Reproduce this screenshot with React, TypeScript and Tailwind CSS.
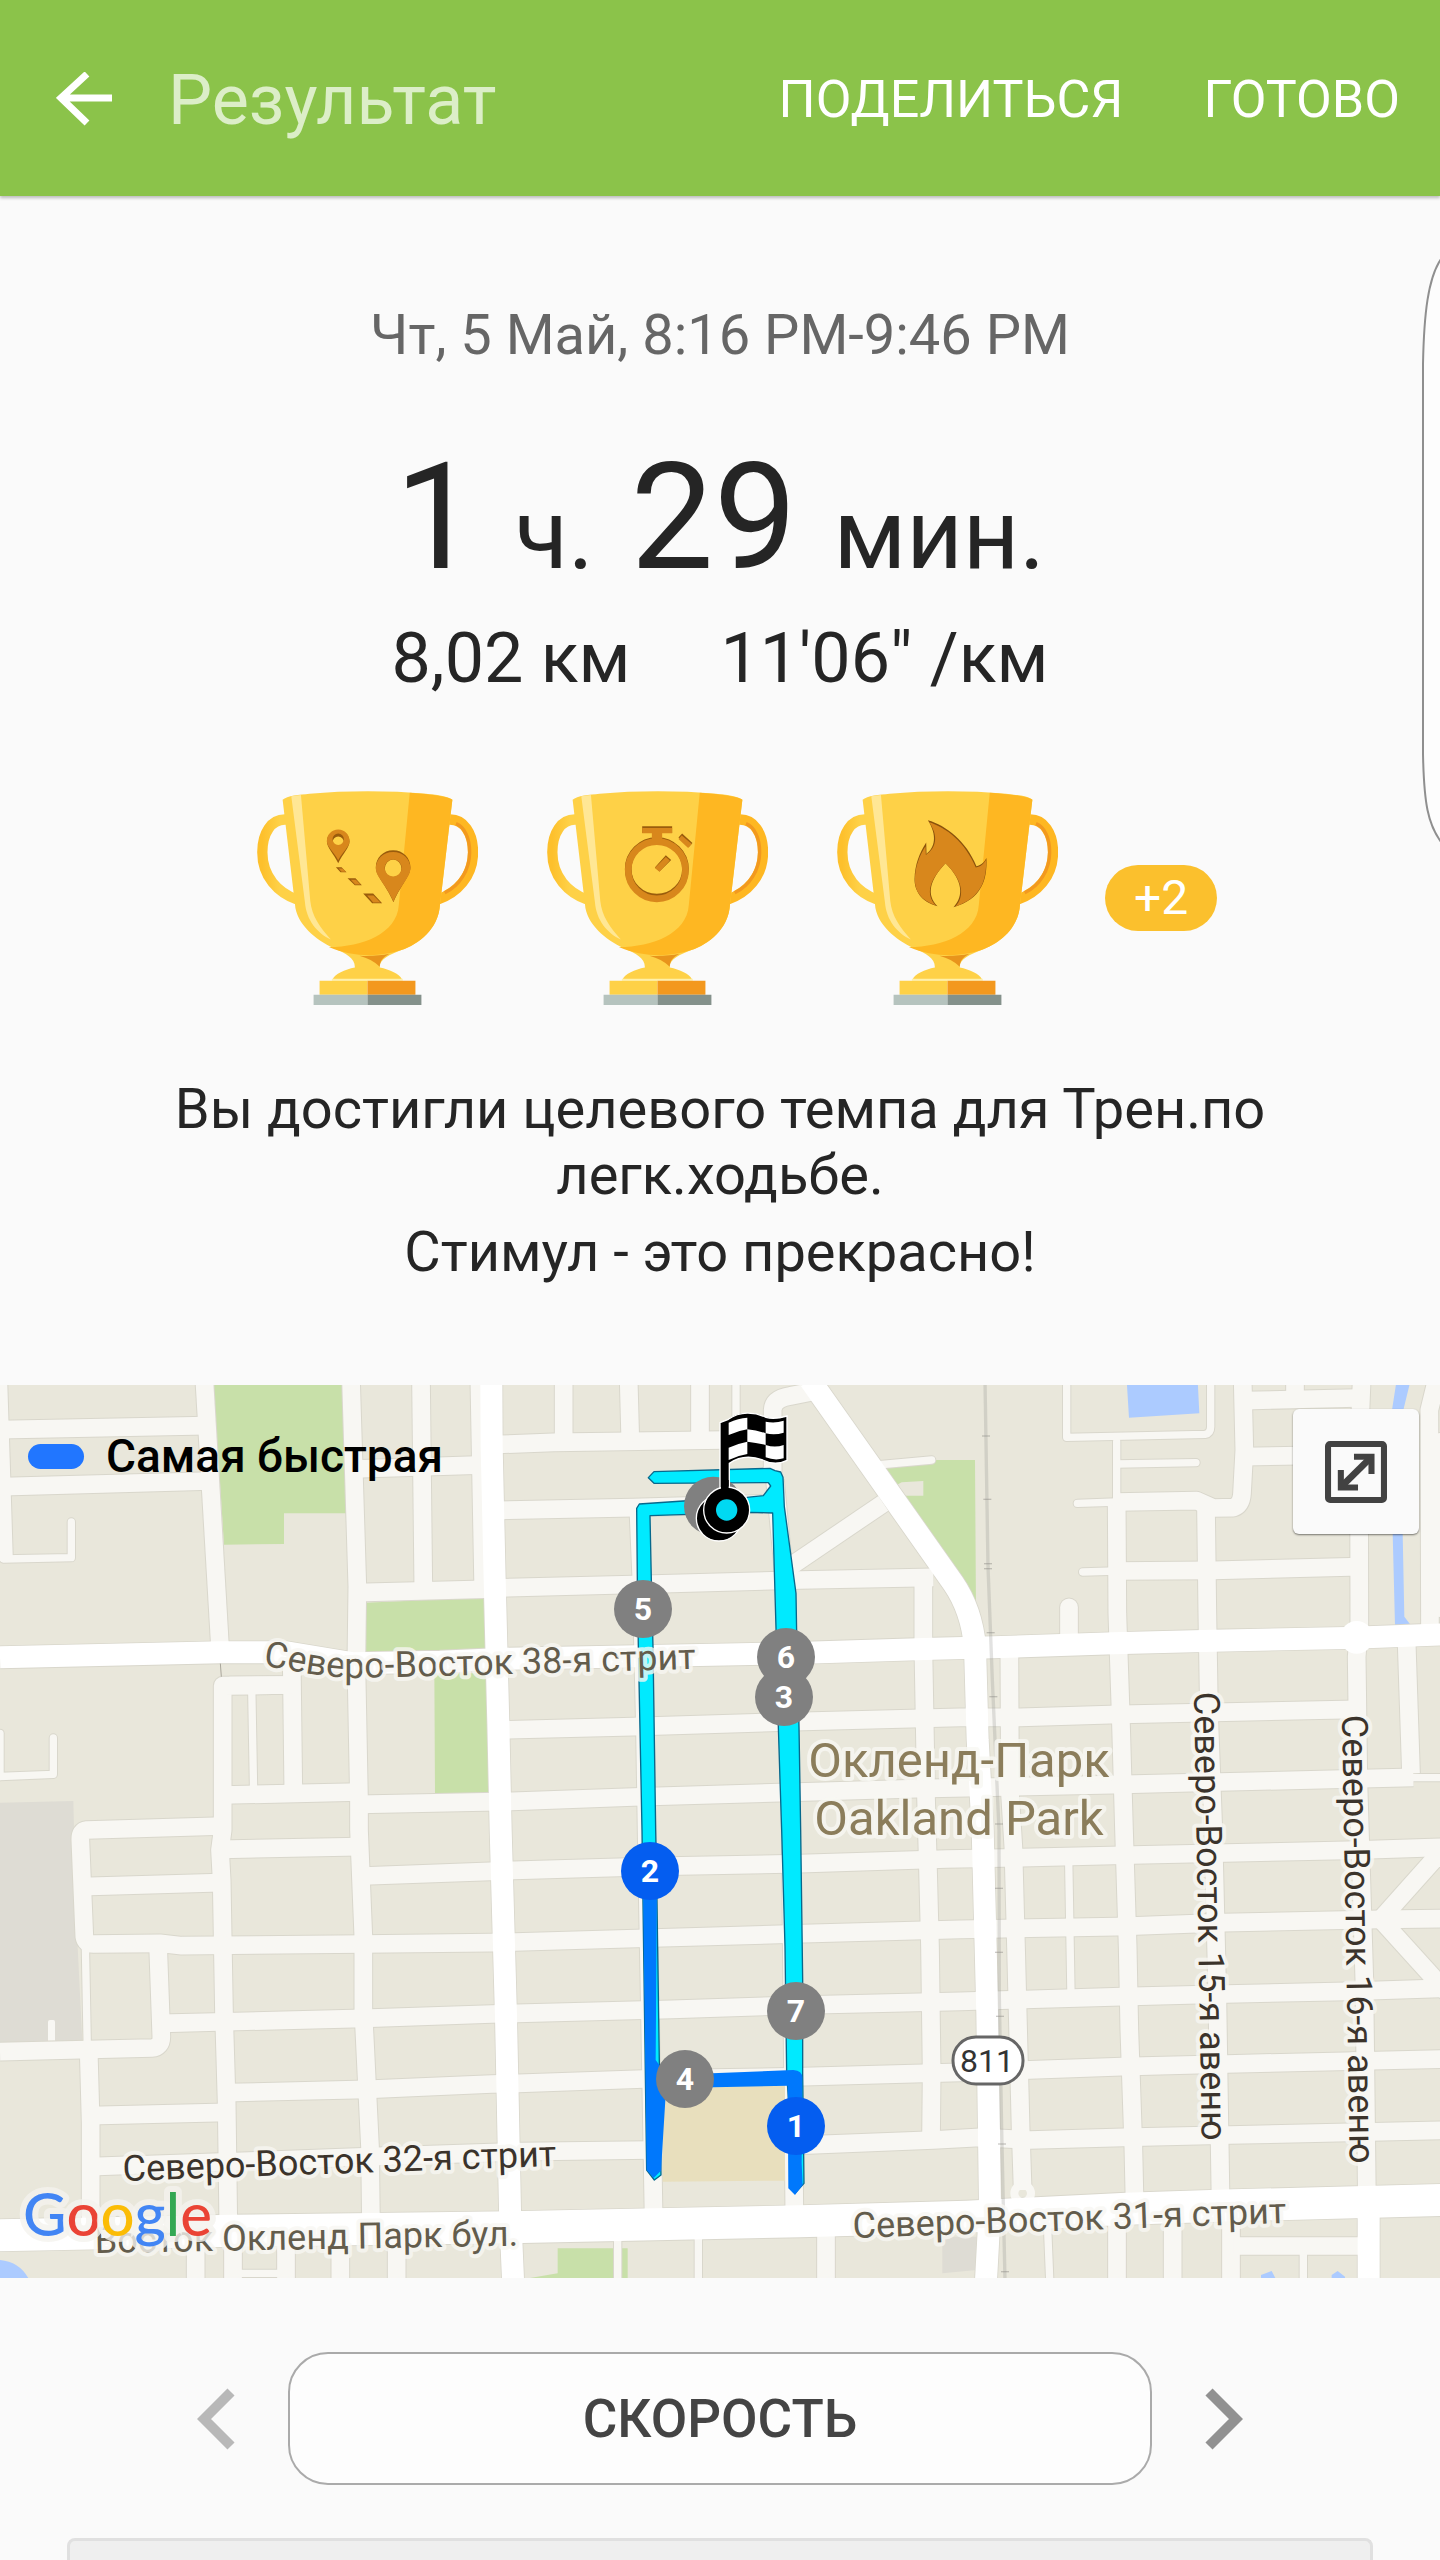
import React from 'react';

// Map geometry is kept at three units per pixel, origin 5px above the map's top edge.
const minorRoads = [
  'M-5 0 L12 540', 'M0 149 L620 137', 'M10 320 L630 303', 'M613 0 L660 800',
  'M1053 0 L1072 620 L1069 850 L1077 1260 L1077 1350 L1090 1670 L1090 1890 L1110 2300 L1113 2540',
  'M1263 0 L1270 630', 'M1060 267 L1475 254', 'M1070 638 L1480 627', 'M1438 0 L1450 640',
  'M875 830 L880 1240', 'M688 917 L875 915',
  'M875 915 L668 917 L668 1350 L660 1410 L665 1500 L668 1670 L672 1900 L680 2170 L685 2540',
  'M668 1245 L1077 1236', 'M668 1338 L260 1350 Q240 1352 241 1380 L253 1670 Q256 1692 280 1692 L480 1690 L545 1697 L1090 1692 L1475 1688 L1545 1686 L1960 1674 L2410 1661 L2880 1648 L3350 1640 L3670 1628 L4140 1618 L4330 1616',
  'M1077 1273 L1535 1264 L1900 1251 L2340 1238 L2750 1226 L3340 1214 L3660 1206 L4240 1192',
  'M244 1520 L660 1508', 'M660 1408 L1077 1400',
  'M1090 1488 L1470 1474 L1540 1471 L1960 1459 L2400 1451 L2840 1437 L3065 1433 L3400 1425 L4040 1411 L4330 1402',
  'M4142 1618 L4350 1385', 'M4142 1618 L4370 1870',
  'M0 2015 L455 2004 Q484 2002 484 1970 L474 1690',
  'M484 1930 L1090 1915 L1475 1902 L1550 1900 L2015 1888 L2415 1875 L2880 1864 L3365 1850 L3680 1842 L4040 1834 L4330 1825',
  'M266 2010 L272 2230 L272 2550', 'M270 2207 L680 2197',
  'M680 2138 L1100 2128 L1475 2112 L1555 2110 L1930 2097 L2410 2090 L2880 2077 L3365 2060 L3680 2052 L4330 2037',
  'M272 2360 L1110 2330 L1475 2318 L1560 2315 L1950 2310',
  'M2390 2296 L2800 2280 L2940 2272 L3090 2280 L3370 2272 L3690 2265 L4330 2251',
  'M1475 194 L1660 187 L2170 180 L2320 178', 'M1490 391 L1900 383 L2330 370',
  'M1490 624 L1960 612 L2400 600 L2800 592', 'M1495 1050 L1900 1040 L2410 1024 L2880 1012 L3060 1012 L3330 1004 L4070 988',
  'M1691 0 V190', 'M1886 0 L1891 185', 'M2100 0 V180',
  'M2460 30 L2370 48 Q2320 56 2318 90 L2318 300',
  'M1915 385 L1925 620 L1935 1050 L1942 1480 L1950 1900 L1961 2520',
  'M2325 300 L2355 620 L2372 1350 L2383 2500', 'M2370 560 L2650 370',
  'M2770 590 L2770 800 L2778 1250 L2783 1430 L2790 1700 L2795 2080 L2793 2280',
  'M3028 800 L3030 1240 L3040 1400 L3048 1700 L3062 2250 L3068 2430',
  'M3350 360 L3352 700 L3362 1000 L3372 1350 L3383 1700 L3388 1950 L3400 2300 L3404 2480',
  'M3350 366 L3590 362 L3640 384 L3700 383 Q3724 375 3726 340 L3733 210 L3728 0',
  'M3618 385 L3622 700 L3627 1000 L3640 1350 L3652 1850 L3662 2480', 'M3350 573 L3640 571 L4080 560',
  'M3730 62 L4070 54', 'M3885 0 V50', 'M3730 230 L4080 224',
  'M4085 0 L4077 200 L4078 740 L4070 830 L4075 1200 L4093 1800 L4101 2480',
  'M4310 0 L4288 90 L4290 760', 'M4220 790 L4233 1180',
  'M587 2570 V2720', 'M699 2570 V2720', 'M858 2570 V2720', 'M1021 2570 V2720', 'M1190 2570 V2720',
  'M2478 2540 V2720', 'M3351 2520 V2720', 'M3518 2520 V2720', 'M3693 2520 V2720', 'M3700 2598 H4100',
];

const alleys = [
  'M10 537 L214 533 L214 426', 'M755 917 L761 1245', 'M-10 1190 L160 1183 L160 1074', 'M0 1060 V1190',
  'M256 1690 L262 2010', 'M2208 0 V180', 'M2630 255 L2795 240', 'M3200 0 V172 L3615 163 Q3632 160 3632 140 V0',
  'M3350 185 V360', 'M3350 252 L3588 248', 'M3232 370 L3350 366', 'M3248 576 L3350 573',
  'M3206 1440 L3213 1845', 'M4240 1193 H4330', 'M700 2680 H860', 'M1853 2580 V2720', 'M2095 2570 V2720',
  'M3143 2550 L3150 2720', 'M3910 2600 V2720', 'M4320 170 V700',
];

const mainRoads = [
  'M0 832 L660 817 L860 817 L1060 850 L1320 845 L1520 836 L2320 821 L2800 806 L2980 802 L3340 790 L3640 782 L4040 774 L4330 763',
  'M1474 0 L1475 200 L1484 600 L1495 1030 L1502 1350 L1518 1910 L1530 2490 L1540 2720',
  'M2430 0 L2860 610 Q2915 690 2925 800 L2933 1080 L2948 1350 L2962 1900 L2970 2480 L2957 2720',
  'M4106 2480 V2720',
];

const boulevard = 'M-10 2566 L700 2552 L1530 2542 L2400 2524 L2900 2510 L3380 2486 L3700 2476 L4330 2460';

const markers = [
  { label: '5', x: 643, y: 224, fill: '#808080' },
  { label: '6', x: 786, y: 272, fill: '#808080' },
  { label: '3', x: 784, y: 312, fill: '#808080' },
  { label: '2', x: 650, y: 486, fill: '#045df0' },
  { label: '7', x: 796, y: 626, fill: '#808080' },
  { label: '4', x: 685, y: 694, fill: '#808080' },
  { label: '1', x: 796, y: 741, fill: '#045df0' },
];

const railTicks = [
  [2958, 168], [2962, 358], [2964, 551], [2964, 566], [2972, 758], [2980, 950], [2997, 1332],
  [2997, 1525], [2997, 1717], [3000, 1909], [3006, 2292], [3015, 2675],
];

const Trophy: React.FC<{ id: string; label: string; children: React.ReactNode }> = ({ id, label, children }) => (
  <svg viewBox="172 62 664 643" className="w-[221px] h-[214px]" role="img" aria-label={label}>
    <defs>
      <linearGradient id={`${id}-left`} x1="0" x2="1">
        <stop offset="0" stopColor="#fdc02c" />
        <stop offset="0.5" stopColor="#fed147" />
      </linearGradient>
    </defs>
    {/* Handles */}
    <path d="M262 148 C214 144 188 190 188 246 C188 320 236 368 292 388" fill="none" stroke={`url(#${id}-left)`} strokeWidth="31" />
    <path d="M746 148 C794 144 821 190 821 246 C821 320 772 368 716 388" fill="none" stroke="#feb722" strokeWidth="31" />
    <path d="M770 160 C796 170 811 205 811 246 C811 300 780 346 736 368" fill="none" stroke="#f2991f" strokeWidth="10" />
    {/* Cup */}
    <path d="M249 88 C262 76 300 73 330 70 C440 60 570 60 680 70 C708 73 746 77 759 88 L722 402 C718 478 656 522 606 540 C570 555 540 566 541 592 C570 598 602 612 607 627 H400 C405 612 436 598 466 592 C467 566 440 550 402 534 C350 510 290 462 286 402 Z" fill="#fed147" />
    <path d="M631 67 C680 70 746 77 759 88 L722 402 C718 478 656 522 606 540 C540 562 460 562 388 531 C490 530 592 490 598 405 Z" fill="#feb722" />
    <path d="M480 557 C512 559 546 556 570 551 C548 562 541 576 541 590 C524 574 504 564 480 557 Z" fill="#e8941c" />
    <path d="M275 78 L304 74 L332 392 C336 438 364 476 394 508 C354 490 320 450 316 396 Z" fill="#ffe795" />
    <path d="M397 626 H610 V632 H397 Z" fill="#fff0a8" />
    {/* Base */}
    <path d="M360 632 H504 V674 H360 Z" fill="#fed147" />
    <path d="M504 632 H648 V674 H504 Z" fill="#f3981e" />
    <path d="M342 674 H504 V705 H342 Z" fill="#b5c3be" />
    <path d="M504 674 H666 V705 H504 Z" fill="#84918b" />
    {children}
  </svg>
);

const RouteEmblem = () => (
  <g>
    <g fill="#9a5c0c">
      <path fillRule="evenodd" d="M416 181 C436 181 450 196 450 214 C450 232 430 250 416 279 C402 250 382 232 382 214 C382 196 396 181 416 181 Z M416 199 A17 18 0 1 0 416 235 A17 18 0 1 0 416 199 Z" />
      <path fillRule="evenodd" d="M581 240 C611 240 633 263 633 291 C633 318 606 340 582 396 C558 340 529 318 529 291 C529 263 551 240 581 240 Z M581 268 A25 27 0 1 0 581 322 A25 27 0 1 0 581 268 Z" />
      <path d="M409 291 H426 L441 306 H423 Z M444 324 H468 L487 345 H466 Z M491 370 H521 L548 399 H518 Z" />
    </g>
    <g fill="#d8871c">
      <path fillRule="evenodd" d="M416 178 C436 178 450 194 450 212 C450 230 432 240 416 270 C400 240 382 230 382 212 C382 194 396 178 416 178 Z M416 190 A17 17 0 1 0 416 224 A17 17 0 1 0 416 190 Z" />
      <path fillRule="evenodd" d="M581 245 C611 245 633 267 633 294 C633 320 606 340 582 394 C558 340 529 320 529 294 C529 267 551 245 581 245 Z M581 268 A25 25 0 1 0 581 319 A25 25 0 1 0 581 268 Z" />
      <path d="M417 295 H429 L439 305 H426 Z M454 329 H469 L483 343 H467 Z M503 376 H522 L543 397 H521 Z" />
    </g>
  </g>
);

const StopwatchEmblem = () => (
  <g>
    <g stroke="#9a5c0c" fill="#9a5c0c">
      <ellipse cx="502" cy="296" rx="86" ry="85" fill="none" strokeWidth="20" />
      <path stroke="none" d="M458 168 H548 V188 H458 Z M578 190 L609 218 L598 230 L567 202 Z M529 255 L545 269 L510 304 L496 292 Z" />
    </g>
    <g stroke="#d8871c" fill="#d8871c">
      <ellipse cx="502" cy="300" rx="86" ry="86" fill="none" strokeWidth="20" />
      <path stroke="none" d="M458 173 H548 V189 H518 V212 H487 V189 H458 Z M577 196 L607 221 L596 233 L567 206 Z M529 260 L541 271 L510 305 L496 293 Z" />
    </g>
  </g>
);

const FlameEmblem = () => (
  <g>
    <path d="M445 150 C500 166 560 212 591 288 C606 284 614 276 621 263 C624 330 606 386 522 411 C554 378 550 330 498 279 C450 330 440 374 474 408 C424 396 404 360 405 326 C406 284 420 248 440 217 L441 251 C466 232 474 196 445 150 Z" fill="#8a520c" />
    <path d="M449 156 C500 172 556 214 589 292 C604 290 614 280 620 268 C622 330 604 384 528 409 C556 378 552 332 498 279 C448 332 438 372 468 405 C424 392 405 360 406 328 C407 288 420 256 438 228 L439 254 C470 234 478 198 449 156 Z" fill="#d8871c" />
  </g>
);

const RouteMap = () => (
  <svg viewBox="0 0 1440 893" className="block w-full" role="img" aria-label="Карта маршрута">
    <rect width="1440" height="893" fill="#e9e7db" />
    <g transform="translate(0 -5) scale(0.333333)" fill="none">
      {/* Parks, water, grounds */}
      <path fill="#c8e0a9" d="M640 0 H1027 L1040 400 H852 V492 L672 494 Z M1098 668 L1455 652 L1462 820 H1098 Z M1303 880 H1466 V1238 L1305 1242 Z M2630 240 H2925 L2928 690 L2880 620 L2630 260 Z M1590 2694 L1673 2680 V2605 H1883 V2694 Z" />
      <path fill="#e9e7db" d="M2690 315 L2705 307 L2770 303 V347 H2700 Z" />
      <path fill="#accbff" d="M3380 0 H3593 L3598 100 L3387 113 Z M4190 0 H4232 L4210 90 L4208 460 L4213 710 L4232 735 H4185 L4178 460 L4176 90 Z M0 2640 Q60 2645 88 2700 H0 Z M3783 2685 L3815 2673 L3829 2700 H3783 Z M3995 2685 L4013 2673 L4035 2690 V2700 H3995 Z" />
      <path fill="#dedcd4" d="M0 1268 L220 1263 L228 1600 L247 1985 L0 1992 Z M2827 2570 H2930 V2670 L2827 2680 Z" />
      <path fill="#f8f7f3" d="M144 1926 Q144 1920 150 1920 H160 Q165 1920 165 1926 V1982 H144 Z" />

      {/* Road edges first, then surfaces */}
      <g stroke="#d9d7cc" strokeLinejoin="round">
        {minorRoads.map((d) => <path key={d} d={d} strokeWidth="59" />)}
        {alleys.map((d) => <path key={d} d={d} strokeWidth="28" strokeLinecap="round" />)}
        {mainRoads.map((d) => <path key={d} d={d} strokeWidth="71" />)}
        <path d={boulevard} strokeWidth="101" />
        <path d="M3207 682 V790" strokeWidth="59" strokeLinecap="round" />
        <path d="M661 850 L664 890" strokeWidth="3" stroke="#a9a69b" />
      </g>
      <g stroke="#f8f7f3" strokeLinejoin="round">
        {minorRoads.map((d) => <path key={d} d={d} strokeWidth="53" />)}
        {alleys.map((d) => <path key={d} d={d} strokeWidth="22" strokeLinecap="round" />)}
        <path d="M3207 682 V790" strokeWidth="53" strokeLinecap="round" />
        <circle cx="3068" cy="2440" r="12" strokeWidth="50" />
      </g>
      <path fill="#e8dfbd" d="M1988 2122 L2355 2116 V2402 L1988 2405 Z" />
      <g stroke="#fff" strokeLinejoin="round">
        {mainRoads.map((d) => <path key={d} d={d} strokeWidth="66" />)}
        <path d={boulevard} strokeWidth="96" />
        <circle cx="4070" cy="772" r="24" strokeWidth="50" />
      </g>

      {/* Railway */}
      <path d="M2955 0 L2964 560 L2977 900 L2997 1350 L2998 1850 L3005 2250 L3015 2700" stroke="#8c8a86" strokeOpacity="0.25" strokeWidth="10" />
      {railTicks.map(([x, y]) => (
        <path key={y} d={`M${x - 12} ${y} h24`} stroke="#8c8a86" strokeOpacity="0.45" strokeWidth="4" />
      ))}

      {/* Track */}
      <g transform="translate(1440 0)">
        <path fill="#00eaff" stroke="#07688c" strokeWidth="4" strokeLinejoin="round" d="M505 293 L522 275 L870 265 L885 272 L902 276 L909 292 L913 380 L948 640 L950 760 L957 1040 L962 1350 L968 1800 L968 2080 L972 2410 L945 2440 L920 2080 L915 1700 L905 1350 L900 1200 L895 1040 L888 745 L878 399 L812 397 L510 407 L514 600 L519 800 L527 1350 L530 1500 L543 2385 L523 2400 L500 2370 L488 1500 L486 1350 L475 800 L472 600 L470 385 L478 372 L610 363 L800 352 L850 347 L872 318 L865 308 L522 310 Z" />
        <path fill="#0078fc" d="M489 1500 L531 1500 L527 2040 L560 2085 L940 2070 Q968 2072 967 2095 L965 2350 L968 2415 L945 2445 L925 2425 L923 2117 L700 2122 L558 2128 L543 2372 L521 2394 L500 2370 Z" />
        <circle cx="700" cy="378" r="88" fill="#808080" />
        {/* Finish flag */}
        <circle cx="717" cy="415" r="68" fill="#000" stroke="#fff" strokeWidth="4" />
        <path fill="#000" stroke="#fff" strokeWidth="4" d="M720 128 L745 118 C780 92 825 96 858 112 C880 118 900 114 921 108 V241 C900 252 872 252 848 240 C815 228 780 228 748 250 V340 H720 Z" />
        <path fill="#fff" d="M746 128 Q775 114 802 113 V148 Q775 152 746 165 Z M857 125 Q885 131 911 122 V158 Q885 166 857 160 Z M802 148 Q830 150 857 160 V195 Q830 188 802 185 Z M746 203 Q775 190 802 185 V222 Q775 226 746 240 Z M857 195 Q885 204 911 195 V235 Q885 243 857 232 Z" />
        <circle cx="740" cy="390" r="69" fill="#000" stroke="#fff" strokeWidth="4" />
        <path fill="#000" d="M723 300 H746 V345 H723 Z" />
        <circle cx="740" cy="390" r="32" fill="#00d9f2" />
      </g>
    </g>

    {/* Street and town names */}
    <defs>
      <path id="street-38" d="M263 281 C285 283 320 293 355 293 L480 290 L760 282" />
    </defs>
    <g className="font-['Roboto',sans-serif] text-[36px]" stroke="#f8f7f3" strokeOpacity="0.8" strokeWidth="8" strokeLinejoin="round" paintOrder="stroke" fill="#635c4c">
      <text><textPath href="#street-38">Северо-Восток 38-я стрит</textPath></text>
      <text transform="translate(95 868) rotate(-1)">Восток Окленд Парк бул.</text>
      <text transform="translate(853 853) rotate(-2)">Северо-Восток 31-я стрит</text>
      <g fill="#3b332b">
        <text transform="translate(123 796) rotate(-2)">Северо-Восток 32-я стрит</text>
        <text transform="translate(1194 307) rotate(89)">Северо-Восток 15-я авеню</text>
        <text transform="translate(1342 330) rotate(89)">Северо-Восток 16-я авеню</text>
      </g>
    </g>
    <g className="font-['Roboto',sans-serif] text-[49px]" textAnchor="middle" stroke="#f8f7f3" strokeOpacity="0.8" strokeWidth="8" strokeLinejoin="round" paintOrder="stroke" fill="#8b7d5b">
      <text x="959" y="392">Окленд-Парк</text>
      <text x="959" y="450">Oakland Park</text>
    </g>
    <rect x="953" y="652" width="70" height="47" rx="23" fill="#fff" stroke="#666" strokeWidth="3" />
    <text x="987" y="687" textAnchor="middle" fill="#333" className="font-['Roboto',sans-serif] text-[32px]">811</text>

    {/* Kilometre markers */}
    {markers.map((m) => (
      <g key={m.label}>
        <circle cx={m.x} cy={m.y} r="29" fill={m.fill} />
        <text x={m.x} y={m.y + 11} textAnchor="middle" fill="#fff" className="font-['Roboto',sans-serif] text-[32px] font-bold">
          {m.label}
        </text>
      </g>
    ))}

    <text x="23" y="851" stroke="#f4f2ee" strokeOpacity="0.8" strokeWidth="12" strokeLinejoin="round" paintOrder="stroke" className="font-['Lato',sans-serif] text-[60px] font-medium">
      <tspan fill="#4285f4">G</tspan>
      <tspan fill="#ea4335">o</tspan>
      <tspan fill="#fbbc05">o</tspan>
      <tspan fill="#4285f4">g</tspan>
      <tspan fill="#34a853">l</tspan>
      <tspan fill="#ea4335">e</tspan>
    </text>
  </svg>
);

const App: React.FC = () => {
  return (
    <div className="relative min-h-screen flex flex-col bg-[#fafafa] font-['Roboto',sans-serif] text-[#252525] overflow-x-hidden">
      {/* Top bar */}
      <header className="h-[196px] shrink-0 flex items-center pl-14 pr-10 pt-1 bg-[#8bc34a] text-white shadow-[0_2px_3px_rgba(0,0,0,0.25)]">
        <button type="button" aria-label="Назад" className="mr-14">
          <svg viewBox="0 0 56 56" className="size-14" fill="none" stroke="currentColor" strokeWidth="7">
            <path d="M31 2 L5 26 L31 51 M5 26 H56" />
          </svg>
        </button>
        <h1 className="text-[70px] leading-20 text-[#dceec8]">Результат</h1>
        <div className="ml-auto flex gap-20">
          <button type="button" className="text-[52px] leading-16">ПОДЕЛИТЬСЯ</button>
          <button type="button" className="text-[52px] leading-16">ГОТОВО</button>
        </div>
      </header>

      {/* Edge panel handle */}
      <svg viewBox="0 0 20 600" className="absolute right-0 top-[254px] w-5 h-[600px]" fill="#fdfdfd" stroke="#8f8f8f" strokeWidth="2" aria-hidden="true">
        <path d="M21 5 C8 24 4 60 3 110 V500 C4 550 8 570 21 588" />
      </svg>

      {/* Summary */}
      <section className="flex flex-col items-center pt-[107px] text-center">
        <p className="text-[56px] leading-16 text-[#666]">Чт, 5 Май, 8:16 PM-9:46 PM</p>
        <p className="mt-[71px] text-[148px] leading-40">
          1 <span className="text-[98px] leading-none">ч.</span> 29 <span className="text-[98px] leading-none">мин.</span>
        </p>
        <div className="mt-5 flex gap-[90px] text-[70px] leading-20">
          <span>8,02 км</span>
          <span>11'06" /км</span>
        </div>

        <div className="mt-[93px] pl-[34px] flex items-center">
          <div className="flex gap-[69px]">
            <Trophy id="distance" label="Расстояние"><RouteEmblem /></Trophy>
            <Trophy id="duration" label="Время"><StopwatchEmblem /></Trophy>
            <Trophy id="calories" label="Калории"><FlameEmblem /></Trophy>
          </div>
          <span className="ml-[47px] w-28 h-[66px] rounded-full bg-[#fbc02d] text-white text-5xl leading-[66px]">+2</span>
        </div>

        <p className="mt-[71px] max-w-[1150px] text-[56px] leading-[66px]">
          Вы достигли целевого темпа для Трен.по легк.ходьбе.
        </p>
        <p className="mt-[11px] text-[56px] leading-[66px]">Стимул - это прекрасно!</p>
      </section>

      {/* Map */}
      <section className="relative mt-[100px]">
        <RouteMap />
        <div className="absolute left-7 top-11 flex items-center gap-[22px]">
          <span className="w-14 h-[25px] rounded-full bg-[#2176ff]"></span>
          <span className="text-[46px] leading-[54px] font-medium text-black">Самая быстрая</span>
        </div>
        <button
          type="button"
          aria-label="Развернуть карту"
          className="absolute right-[21px] top-6 w-[126px] h-[125px] flex items-center justify-center rounded-md bg-[#fafafa] shadow-[0_1px_2px_rgba(0,0,0,0.5)]"
        >
          <svg viewBox="0 0 184 184" className="size-[62px]" fill="none" stroke="#424242" strokeWidth="18">
            <rect x="9" y="9" width="166" height="166" rx="6" />
            <path d="M86 47 H138 V98 M47 86 V138 H98" />
            <path d="M50 134 L135 50" strokeWidth="20" />
          </svg>
        </button>
      </section>

      {/* Chart switcher */}
      <div className="mt-[74px] flex items-center justify-center gap-[53px]">
        <button type="button" aria-label="Предыдущий график">
          <svg viewBox="0 0 38 62" className="w-[38px] h-[62px]" fill="none" stroke="#b8b8b8" strokeWidth="10">
            <path d="M34 4 L7 31 L34 58" />
          </svg>
        </button>
        <button type="button" className="w-3/5 h-[133px] rounded-[40px] border-2 border-[#aaa] bg-[#fdfdfd] text-[53px] leading-16 font-medium text-[#444]">
          СКОРОСТЬ
        </button>
        <button type="button" aria-label="Следующий график">
          <svg viewBox="0 0 38 62" className="w-[38px] h-[62px]" fill="none" stroke="#919191" strokeWidth="10">
            <path d="M4 4 L31 31 L4 58" />
          </svg>
        </button>
      </div>

      {/* Chart card */}
      <div className="mt-[53px] mx-[67px] min-h-[22px] flex-1 rounded-t-lg border-3 border-b-0 border-[#e0e0e0] bg-[#efefef]"></div>
    </div>
  );
};

export default App;
